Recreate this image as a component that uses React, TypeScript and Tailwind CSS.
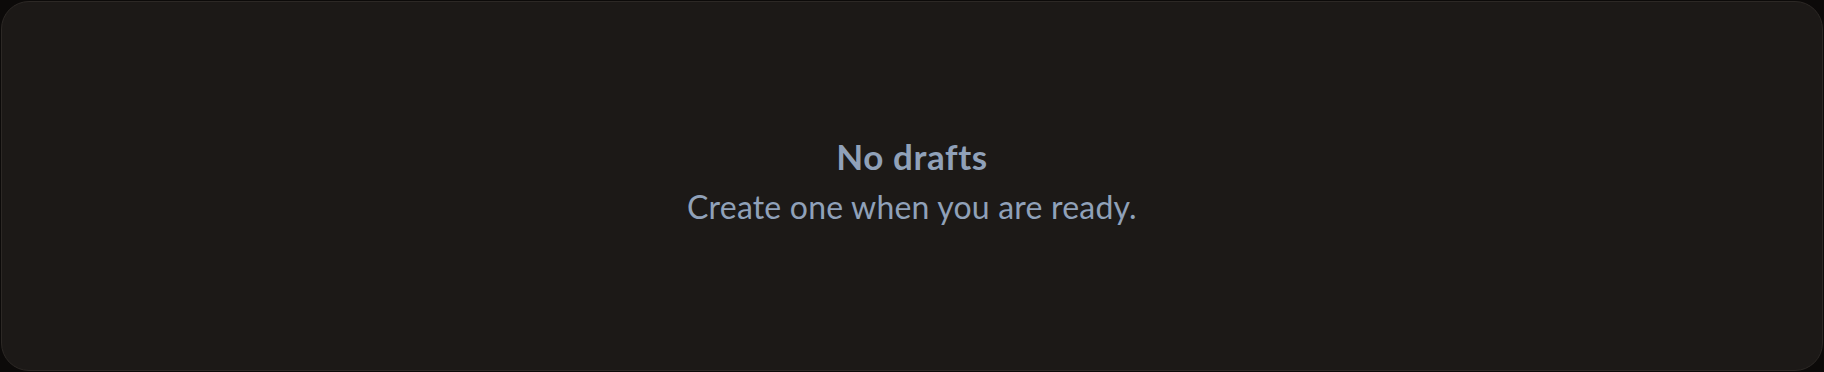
export default function App() {
  return (
    <div className="h-[372px] w-full bg-[#0c0a09] p-px">
      <div className="flex h-full w-full flex-col items-center justify-center rounded-[28px] border border-[#2c2825] bg-[#1c1917] pb-[10px] font-['Lato',sans-serif] text-[#90a1b9]">
        <h2 className="text-[35px] font-bold leading-[44px] tracking-[0.6px]">No drafts</h2>
        <p className="mt-[7px] text-[32px] leading-[44px] tracking-[0.2px]">Create one when you are ready.</p>
      </div>
    </div>
  );
}
